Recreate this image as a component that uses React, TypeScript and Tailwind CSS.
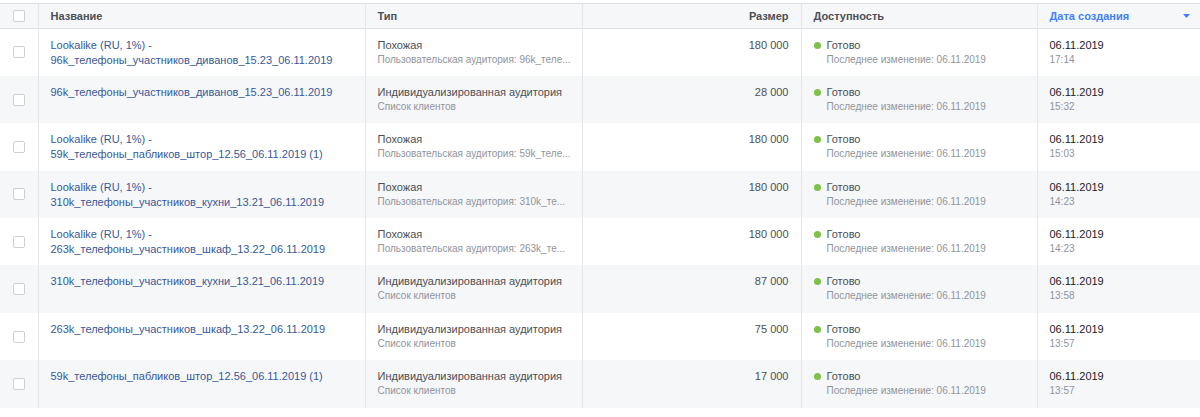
import React from "react";

type Row = {
  name: string[];
  type: string;
  sub: string;
  size: string;
  time: string;
};

const rows: Row[] = [
  {
    name: ["Lookalike (RU, 1%) -", "96k_телефоны_участников_диванов_15.23_06.11.2019"],
    type: "Похожая",
    sub: "Пользовательская аудитория: 96k_теле...",
    size: "180 000",
    time: "17:14",
  },
  {
    name: ["96k_телефоны_участников_диванов_15.23_06.11.2019"],
    type: "Индивидуализированная аудитория",
    sub: "Список клиентов",
    size: "28 000",
    time: "15:32",
  },
  {
    name: ["Lookalike (RU, 1%) -", "59k_телефоны_пабликов_штор_12.56_06.11.2019 (1)"],
    type: "Похожая",
    sub: "Пользовательская аудитория: 59k_теле...",
    size: "180 000",
    time: "15:03",
  },
  {
    name: ["Lookalike (RU, 1%) -", "310k_телефоны_участников_кухни_13.21_06.11.2019"],
    type: "Похожая",
    sub: "Пользовательская аудитория: 310k_те...",
    size: "180 000",
    time: "14:23",
  },
  {
    name: ["Lookalike (RU, 1%) -", "263k_телефоны_участников_шкаф_13.22_06.11.2019"],
    type: "Похожая",
    sub: "Пользовательская аудитория: 263k_те...",
    size: "180 000",
    time: "14:23",
  },
  {
    name: ["310k_телефоны_участников_кухни_13.21_06.11.2019"],
    type: "Индивидуализированная аудитория",
    sub: "Список клиентов",
    size: "87 000",
    time: "13:58",
  },
  {
    name: ["263k_телефоны_участников_шкаф_13.22_06.11.2019"],
    type: "Индивидуализированная аудитория",
    sub: "Список клиентов",
    size: "75 000",
    time: "13:57",
  },
  {
    name: ["59k_телефоны_пабликов_штор_12.56_06.11.2019 (1)"],
    type: "Индивидуализированная аудитория",
    sub: "Список клиентов",
    size: "17 000",
    time: "13:57",
  },
];

const Checkbox = () => (
  <div className="mx-auto h-[12px] w-[12px] rounded-[2px] border border-[#ccd0d5] bg-white" />
);

const cell = "border-l border-[#e5e6e9] px-[12px] pt-[9px] align-top";
const head =
  "border-l border-[#e5e6e9] px-[12px] text-left align-middle text-[11px] font-bold text-[#4b4f56]";

export default function App() {
  return (
    <div
      className="h-[417px] w-[1200px] overflow-hidden bg-white pt-[3px]"
      style={{ fontFamily: '"Liberation Sans", Arial, sans-serif' }}
    >
      <table className="w-full table-fixed border-collapse">
        <colgroup>
          <col className="w-[38px]" />
          <col className="w-[327px]" />
          <col className="w-[217px]" />
          <col className="w-[219px]" />
          <col className="w-[236px]" />
          <col />
        </colgroup>
        <thead>
          <tr className="h-[25px] border-y border-[#dddfe2] bg-[#f6f7f9]">
            <th className="align-middle">
              <Checkbox />
            </th>
            <th className={head}>Название</th>
            <th className={head}>Тип</th>
            <th className={`${head} text-right`}>Размер</th>
            <th className={head}>Доступность</th>
            <th className={`${head} text-[#4080ff]`}>
              <div className="flex items-center justify-between">
                <span>Дата создания</span>
                <svg width="7" height="4" viewBox="0 0 7 4" className="mr-[-2px]">
                  <path d="M0 0h7L3.5 4z" fill="#4080ff" />
                </svg>
              </div>
            </th>
          </tr>
        </thead>
        <tbody>
          {rows.map((r, i) => (
            <tr key={i} className={`h-[47.4px] ${i % 2 ? "bg-[#f6f7f9]" : "bg-white"}`}>
              <td className="align-middle">
                <Checkbox />
              </td>
              <td className={`${cell} text-[11px] leading-[15px] text-[#365899]`}>
                {r.name.map((n) => (
                  <div key={n} className="whitespace-nowrap">
                    {n}
                  </div>
                ))}
              </td>
              <td className={cell}>
                <div className="whitespace-nowrap text-[11px] leading-[15px] text-[#4b4f56]">
                  {r.type}
                </div>
                <div className="whitespace-nowrap text-[10px] leading-[14px] text-[#90949c]">
                  {r.sub}
                </div>
              </td>
              <td className={`${cell} text-right text-[11px] leading-[15px] text-[#4b4f56]`}>
                {r.size}
              </td>
              <td className={cell}>
                <div className="flex items-center gap-[6px] text-[11px] leading-[15px] text-[#4b4f56]">
                  <span className="h-[7px] w-[7px] rounded-full bg-[#7dc247]" />
                  Готово
                </div>
                <div className="whitespace-nowrap pl-[13px] text-[10px] leading-[14px] text-[#90949c]">
                  Последнее изменение: 06.11.2019
                </div>
              </td>
              <td className={cell}>
                <div className="text-[11px] leading-[15px] text-[#1d2129]">06.11.2019</div>
                <div className="text-[10px] leading-[14px] text-[#90949c]">{r.time}</div>
              </td>
            </tr>
          ))}
        </tbody>
      </table>
    </div>
  );
}
